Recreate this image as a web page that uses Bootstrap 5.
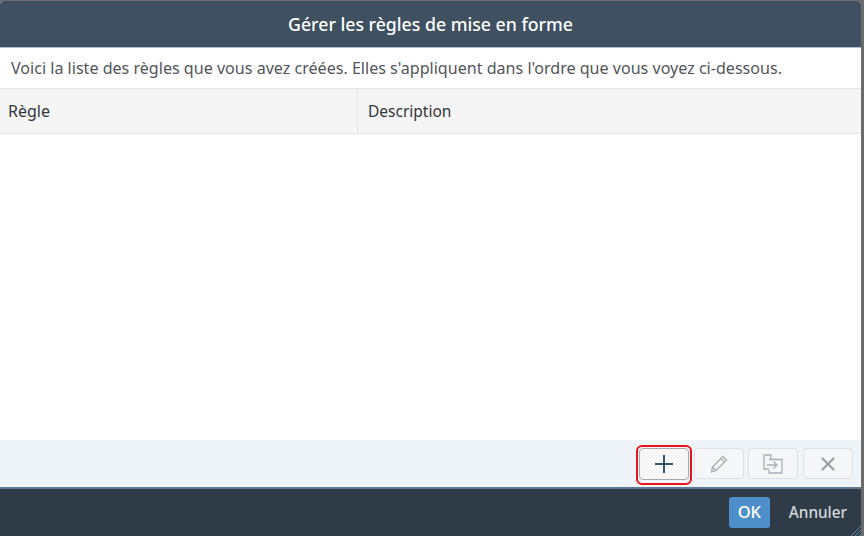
<!doctype html>
<html lang="fr"><head><meta charset="utf-8">
<link href="https://cdn.jsdelivr.net/npm/bootstrap@5.3.0/dist/css/bootstrap.min.css" rel="stylesheet">
<style>
html,body{height:100%;margin:0;background:#6b6b6b;overflow:hidden}
body{font-family:"Noto Sans","Open Sans",sans-serif;font-size:16px;color:#32363a}
.dlg{width:861px;height:535px;margin-top:1px;background:#fff;border-radius:4px 4px 0 0;overflow:hidden;position:relative}
.dlg-head{height:47px;background:#3f5161;color:#fff;font-size:17.7px;font-weight:500;border-bottom:1px solid #a9c0d6}
.dlg-intro{height:40px;padding-left:11px;color:#515559;font-size:16.08px}
.tbl-head{height:46px;background:#f5f5f5;border-top:1px solid #e5e5e5;border-bottom:1px solid #e5e5e5}
.cell-a{width:358px;padding-left:8px;border-right:1px solid #e5e5e5}
.cell-b{padding-left:10px;padding-top:1px;font-size:15.5px}
.tools{height:47px;background:#eff4f9;padding-right:8px;gap:4px}
.tool{width:50px;height:31px;padding:0;background:#f4f6f8;border:1px solid #dde1e4;border-radius:4px;display:flex;align-items:center;justify-content:center}
.tool-on{height:32px;margin-right:1px;background:#f7f7f7;border-color:#a7acb0;position:relative}
.tool-on::after{content:"";position:absolute;inset:-4px -4px -6px -4px;border:2px solid #e8141c;border-radius:6px}
.tool-end{margin-left:1px}
.dlg-foot{height:49px;background:#2f3c48;border-top:2px solid #5f7a94;padding-right:14px;gap:19px}
.ok{width:41px;height:31px;padding:0;background:#4f8fc9;color:#fff;border:0;border-radius:3px;font-weight:500;font-size:16.5px}
.cancel{padding:0;background:none;border:0;color:#d3d8dc;font-weight:500;font-size:15.3px}
.grip{position:absolute;right:0;bottom:0}
</style></head><body>
<div class="dlg d-flex flex-column">
 <div class="dlg-head d-flex align-items-center justify-content-center flex-shrink-0">Gérer les règles de mise en forme</div>
 <div class="dlg-intro d-flex align-items-center flex-shrink-0">Voici la liste des règles que vous avez créées. Elles s'appliquent dans l'ordre que vous voyez ci-dessous.</div>
 <div class="tbl-head d-flex flex-shrink-0">
  <div class="cell-a d-flex align-items-center">Règle</div>
  <div class="cell-b d-flex align-items-center">Description</div>
 </div>
 <div class="flex-grow-1"></div>
 <div class="tools d-flex align-items-center justify-content-end flex-shrink-0">
  <button class="btn tool tool-on" aria-label="Ajouter"><svg width="18" height="18" viewBox="0 0 18 18"><path d="M9 0v18M0 9h18" stroke="#36536e" stroke-width="2" fill="none"/></svg></button>
  <button class="btn tool" aria-label="Modifier"><svg width="18" height="18" viewBox="0 0 18 18" fill="none" stroke="#a9aeb3" stroke-width="1.4"><path d="M1.500 17l1-5L13 1.500 16.500 5 6 15.500z M2.500 12l3.500 3.500M11 3.500 14.500 7"/></svg></button>
  <button class="btn tool" aria-label="Déplacer"><svg width="20" height="20" viewBox="0 0 20 20" fill="none" stroke="#a9aeb3" stroke-width="1.3"><path d="M8 5V1H1v14h5M6 5.500h13V19H6v-3M4 11h10M10.500 7.500 14 11l-3.500 3.500"/></svg></button>
  <button class="btn tool tool-end" aria-label="Supprimer"><svg width="14" height="14" viewBox="0 0 14 14"><path d="M1 1l12 12M13 1L1 13" stroke="#9aa0a5" stroke-width="2.200" fill="none"/></svg></button>
 </div>
 <div class="dlg-foot d-flex align-items-center justify-content-end flex-shrink-0">
  <button class="btn ok">OK</button>
  <button class="btn cancel">Annuler</button>
 </div>
 <svg class="grip" width="10" height="10" viewBox="0 0 10 10" fill="none" stroke="#5f8fb8"><path d="M0 10 10 0M4 10l6-6M8 10l2-2"/></svg>
</div>
</body></html>
